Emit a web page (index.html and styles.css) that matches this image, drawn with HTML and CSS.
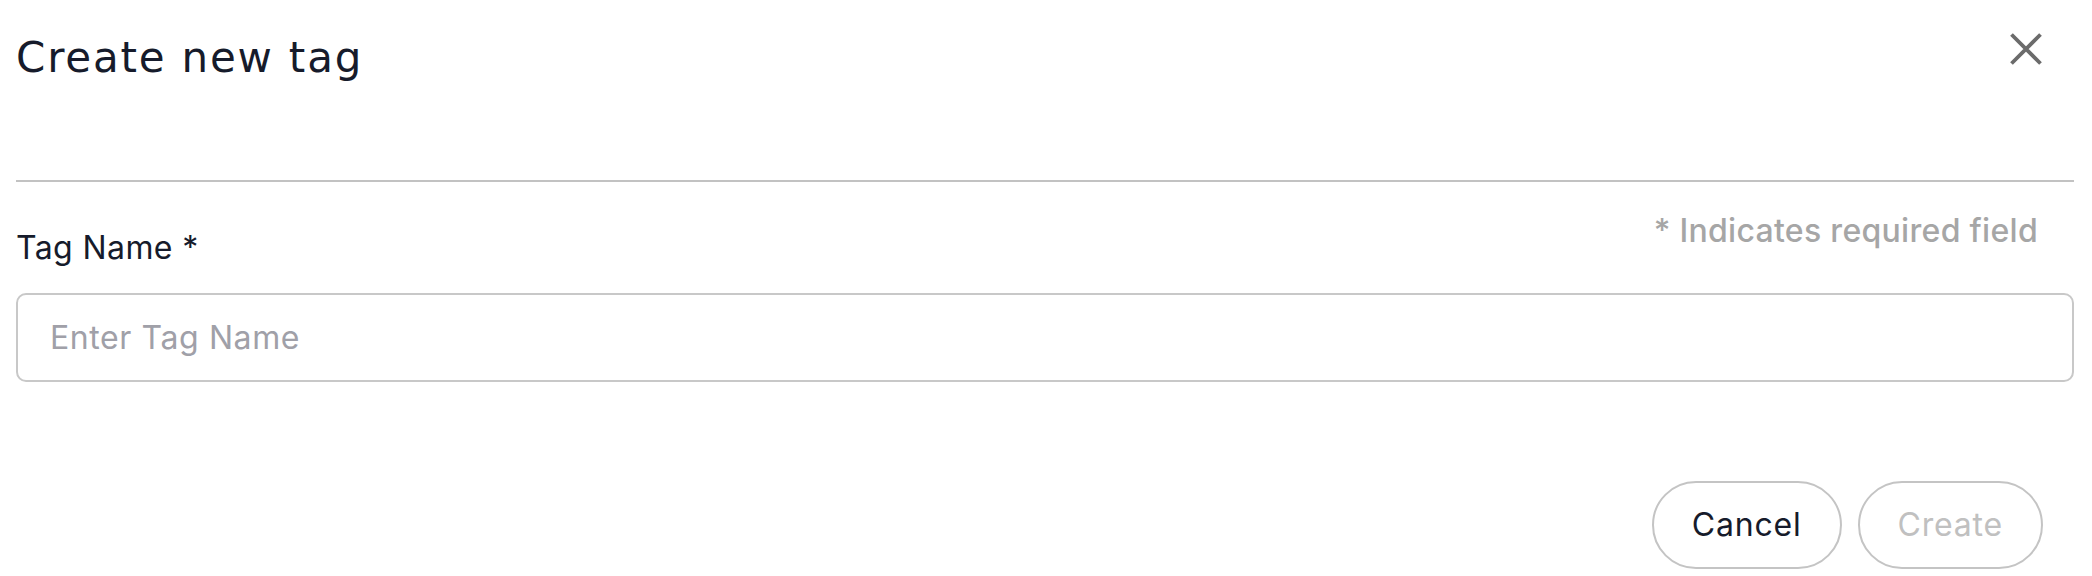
FILE: index.html
```html
<!DOCTYPE html>
<html lang="en">
<head>
<meta charset="utf-8">
<title>Create new tag</title>
<link rel="stylesheet" href="styles.css">
</head>
<body>
<div class="dialog">
  <header class="dialog-header">
    <h1 class="dialog-title">Create new tag</h1>
    <button class="close-btn" type="button" aria-label="Close">
      <svg width="48" height="48" viewBox="0 0 48 48" aria-hidden="true">
        <path d="M9.5 9.5 L38.5 38.5 M38.5 9.5 L9.5 38.5" stroke="#6b6b6b" stroke-width="3.8" stroke-linecap="butt" fill="none"/>
      </svg>
    </button>
  </header>
  <hr class="divider">
  <div class="field-head">
    <label class="field-label" for="tagName">Tag Name *</label>
    <span class="required-note">* Indicates required field</span>
  </div>
  <input class="text-input" id="tagName" type="text" placeholder="Enter Tag Name">
  <div class="actions">
    <button class="btn btn-cancel" type="button">Cancel</button>
    <button class="btn btn-create" type="button" disabled>Create</button>
  </div>
</div>
</body>
</html>
```

FILE: styles.css
```css
* { box-sizing: border-box; }
html, body {
  margin: 0;
  padding: 0;
  background: #ffffff;
}
body {
  font-family: Inter, "Noto Sans", "Liberation Sans", sans-serif;
  color: #161b2b;
}
.dialog {
  width: 2092px;
  height: 576px;
  padding: 32px 18px 0 16px;
  display: flex;
  flex-direction: column;
}
.dialog-header {
  display: flex;
  justify-content: space-between;
  align-items: flex-start;
  height: 52px;
  margin-bottom: 96px;
}
.dialog-title {
  margin: 0;
  font-family: "DejaVu Sans", Inter, sans-serif;
  font-size: 42px;
  line-height: 52px;
  font-weight: 400;
  letter-spacing: 1.8px;
  color: #161b2b;
}
.close-btn {
  margin: -7px 24px 0 0;
  width: 48px;
  height: 48px;
  padding: 0;
  border: none;
  background: none;
  display: flex;
}
.divider {
  margin: 0;
  border: none;
  height: 2px;
  background: #c2c2c2;
}
.field-head {
  margin-top: 29px;
  height: 57px;
  display: flex;
  justify-content: space-between;
}
.field-label {
  align-self: flex-end;
  font-size: 32px;
  line-height: 40px;
  letter-spacing: 0.4px;
  color: #161b2b;
}
.required-note {
  align-self: flex-start;
  margin-right: 36px;
  font-size: 32px;
  line-height: 40px;
  font-weight: 500;
  letter-spacing: 0.3px;
  color: #a6a6a6;
}
.text-input {
  margin-top: 25px;
  width: 100%;
  height: 89px;
  border: 2px solid #c8c8c8;
  border-radius: 10px;
  padding: 0 32px;
  font-family: inherit;
  font-size: 32px;
  letter-spacing: 0.6px;
  color: #161b2b;
  outline: none;
}
.text-input::placeholder {
  color: #a0a0a8;
}
.actions {
  margin-top: 99px;
  display: flex;
  justify-content: flex-end;
  gap: 16px;
  padding-right: 31px;
}
.btn {
  height: 88px;
  border: 2px solid #c4c4c4;
  border-radius: 44px;
  background: #ffffff;
  padding: 0 38px;
  font-family: inherit;
  font-size: 32px;
  line-height: 40px;
  letter-spacing: 0.8px;
}
.btn-cancel { color: #161b2b; }
.btn-create { color: #c0c0c0; }
```
